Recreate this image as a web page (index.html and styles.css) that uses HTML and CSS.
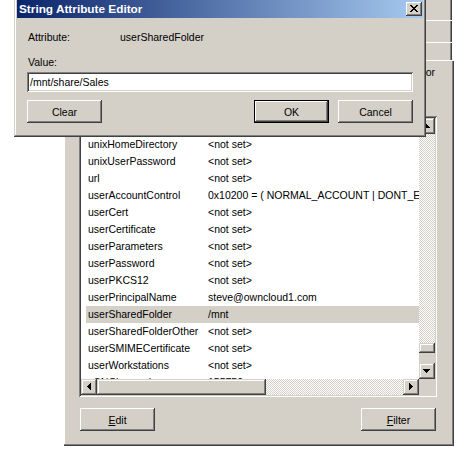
FILE: index.html
```html
<!DOCTYPE html>
<html>
<head>
<meta charset="utf-8">
<link rel="stylesheet" href="styles.css">
</head>
<body>
<div class="desk">
  <div class="props">
    <div class="tabrow r1"><span class="tab">General</span><span class="tab">Address</span><span class="tab">Account</span></div>
    <div class="tabrow r2"><span class="tab">Profile</span><span class="tab">Telephones</span><span class="tab">Organization</span></div>
    <div class="tabrow r3"><span class="tab">Environment</span><span class="tab">Sessions</span><span class="tab">Remote control</span></div>
    <div class="tabrow sel"><span class="tab">Member Of</span><span class="tab cur">Attribute Editor</span></div>
    <div class="page">
      <div class="listbox">
        <div class="lv">
          <div class="lv-head"><span class="c1">Attribute</span><span class="c2">Value</span></div>
          <div class="lv-row"><span class="c1">unixHomeDirectory</span><span class="c2">&lt;not set&gt;</span></div>
          <div class="lv-row"><span class="c1">unixUserPassword</span><span class="c2">&lt;not set&gt;</span></div>
          <div class="lv-row"><span class="c1">url</span><span class="c2">&lt;not set&gt;</span></div>
          <div class="lv-row"><span class="c1">userAccountControl</span><span class="c2">0x10200 = ( NORMAL_ACCOUNT | DONT_EXPIRE_PASSWORD )</span></div>
          <div class="lv-row"><span class="c1">userCert</span><span class="c2">&lt;not set&gt;</span></div>
          <div class="lv-row"><span class="c1">userCertificate</span><span class="c2">&lt;not set&gt;</span></div>
          <div class="lv-row"><span class="c1">userParameters</span><span class="c2">&lt;not set&gt;</span></div>
          <div class="lv-row"><span class="c1">userPassword</span><span class="c2">&lt;not set&gt;</span></div>
          <div class="lv-row"><span class="c1">userPKCS12</span><span class="c2">&lt;not set&gt;</span></div>
          <div class="lv-row"><span class="c1">userPrincipalName</span><span class="c2">steve@owncloud1.com</span></div>
          <div class="lv-row selected"><span class="c1">userSharedFolder</span><span class="c2">/mnt</span></div>
          <div class="lv-row"><span class="c1">userSharedFolderOther</span><span class="c2">&lt;not set&gt;</span></div>
          <div class="lv-row"><span class="c1">userSMIMECertificate</span><span class="c2">&lt;not set&gt;</span></div>
          <div class="lv-row"><span class="c1">userWorkstations</span><span class="c2">&lt;not set&gt;</span></div>
          <div class="lv-row"><span class="c1">uSNChanged</span><span class="c2">155750</span></div>
        </div>
        <div class="vscroll">
          <div class="sbtn"><svg width="16" height="16" viewBox="0 0 16 16" shape-rendering="crispEdges"><rect x="7" y="6" width="1" height="1"/><rect x="6" y="7" width="3" height="1"/><rect x="5" y="8" width="5" height="1"/><rect x="4" y="9" width="7" height="1"/></svg></div>
          <div class="vtrack"><div class="hatch"></div><div class="vthumb"></div><div class="vgap"></div></div>
          <div class="sbtn"><svg width="16" height="16" viewBox="0 0 16 16" shape-rendering="crispEdges"><rect x="4" y="6" width="7" height="1"/><rect x="5" y="7" width="5" height="1"/><rect x="6" y="8" width="3" height="1"/><rect x="7" y="9" width="1" height="1"/></svg></div>
        </div>
        <div class="hscroll">
          <div class="sbtn"><svg width="16" height="16" viewBox="0 0 16 16" shape-rendering="crispEdges"><rect x="6" y="7" width="1" height="1"/><rect x="7" y="6" width="1" height="3"/><rect x="8" y="5" width="1" height="5"/><rect x="9" y="4" width="1" height="7"/></svg></div>
          <div class="hthumb"></div>
          <div class="hatch"></div>
          <div class="sbtn"><svg width="16" height="16" viewBox="0 0 16 16" shape-rendering="crispEdges"><rect x="6" y="4" width="1" height="7"/><rect x="7" y="5" width="1" height="5"/><rect x="8" y="6" width="1" height="3"/><rect x="9" y="7" width="1" height="1"/></svg></div>
        </div>
        <div class="corner"></div>
      </div>
      <div class="actions">
        <div class="btn"><span><u>E</u>dit</span></div>
        <div class="btn"><span><u>F</u>ilter</span></div>
      </div>
    </div>
  </div>

  <div class="dlg">
    <div class="title">
      <span class="title-text">String Attribute Editor</span>
      <div class="close"><svg width="16" height="14" viewBox="0 0 16 14" shape-rendering="crispEdges">
        <rect x="4" y="3" width="2" height="1"/><rect x="10" y="3" width="2" height="1"/>
        <rect x="5" y="4" width="2" height="1"/><rect x="9" y="4" width="2" height="1"/>
        <rect x="6" y="5" width="4" height="1"/>
        <rect x="7" y="6" width="2" height="1"/>
        <rect x="6" y="7" width="4" height="1"/>
        <rect x="5" y="8" width="2" height="1"/><rect x="9" y="8" width="2" height="1"/>
        <rect x="4" y="9" width="2" height="1"/><rect x="10" y="9" width="2" height="1"/>
      </svg></div>
    </div>
    <div class="dbody">
      <div class="attr"><span class="attr-label">Attribute:</span><span>userSharedFolder</span></div>
      <div class="vlabel">Value:</div>
      <div class="field">/mnt/share/Sales</div>
      <div class="dbtns">
        <div class="btn"><span>Clear</span></div>
        <div class="btn default ok"><span>OK</span></div>
        <div class="btn"><span>Cancel</span></div>
      </div>
    </div>
  </div>
</div>
</body>
</html>
```

FILE: styles.css
```css
* { box-sizing: border-box; margin: 0; padding: 0; }
html, body { background: #fff; }
body {
  width: 476px; height: 452px; overflow: hidden;
  font-family: "Liberation Sans", Arial, sans-serif;
  font-size: 10.5px; color: #000;
}
.desk { position: relative; width: 476px; height: 452px; }

/* background property sheet */
.props {
  position: absolute; left: 64px; top: 0; width: 390px; height: 446px;
  display: flex; flex-direction: column;
}
.tabrow {
  display: flex; justify-content: flex-end; align-items: center;
  background: #d4d0c8;
  margin-right: 2px;
  padding-right: 60px;
  box-shadow: inset 0 1px #fff, inset -1px 0 #404040, inset -2px 0 #808080;
  flex: none;
}
.r1 { height: 20px; box-shadow: inset -1px 0 #404040, inset -2px 0 #808080; }
.r2 { height: 22px; }
.r3 { height: 18px; }
.tab { padding: 0 10px; line-height: 14px; }
.tabrow.sel {
  height: 24px; margin-right: 0; padding-right: 19px;
  box-shadow: inset 0 1px #fff, inset -1px 0 #404040, inset -2px 0 #808080;
}
.tab.cur { padding: 0; }
.page {
  flex: 1; background: #d4d0c8;
  padding: 32px 17px 0 15px;
  box-shadow: inset -1px -1px #404040, inset -2px -2px #808080, inset 1px 0 #fff;
}

/* list box */
.listbox {
  width: 358px; height: 281px; padding: 2px;
  background: #d4d0c8;
  box-shadow: inset 1px 1px #808080, inset -1px -1px #fff, inset 2px 2px #404040, inset -2px -2px #d4d0c8;
  display: grid; grid-template-columns: 338px 16px; grid-template-rows: 261px 16px;
}
.lv { background: #fff; overflow: hidden; }
.lv-head, .lv-row {
  display: grid; grid-template-columns: 120px 1fr;
  height: 17px; line-height: 17px; white-space: nowrap;
  margin-left: 5px; padding-left: 2px;
}
.lv-head { height: 18px; background: #d4d0c8; }
.c1, .c2 { overflow: hidden; white-space: nowrap; }
.c2 { overflow: visible; }
.lv-row.selected { background: #d4d0c8; }

.hatch {
  background: repeating-conic-gradient(#d4d0c8 0 25%, #fff 0 50%) 0 0 / 2px 2px;
}
.sbtn, .hthumb, .vthumb {
  background: #d4d0c8;
  box-shadow: inset -1px -1px #404040, inset 1px 1px #d4d0c8, inset -2px -2px #808080, inset 2px 2px #fff;
}
.sbtn { width: 16px; height: 16px; flex: none; }
.sbtn svg { display: block; }
.vscroll { display: flex; flex-direction: column; }
.vtrack { flex: 1; display: flex; flex-direction: column; }
.vtrack .hatch { flex: 1; }
.vthumb { height: 10px; flex: none; }
.vgap { height: 10px; flex: none; background: #d4d0c8; }
.hscroll { display: flex; }
.hthumb { width: 169px; flex: none; }
.hscroll .hatch { flex: 1; }
.corner { background: #d4d0c8; }

.actions {
  display: flex; justify-content: space-between;
  padding: 11px 1px 0 1px;
}

/* buttons */
.btn {
  width: 75px; height: 23px;
  background: #d4d0c8;
  display: flex; align-items: center; justify-content: center;
  box-shadow: inset -1px -1px #404040, inset 1px 1px #fff, inset -2px -2px #808080, inset 2px 2px #d4d0c8;
}
.btn u { text-decoration: underline; text-underline-offset: 1px; }
.btn.default {
  box-shadow: inset 0 0 0 1px #000, inset -2px -2px #404040, inset 2px 2px #fff, inset -3px -3px #808080;
}

/* dialog */
.dlg {
  position: absolute; left: 14px; top: -3px; width: 412px; height: 140px;
  background: #d4d0c8; padding: 3px;
  box-shadow: inset -1px -1px #404040, inset 1px 1px #d4d0c8, inset -2px -2px #808080, inset 2px 2px #fff;
}
.title {
  height: 18px; display: flex; align-items: center;
  background: linear-gradient(to right, #0a246a, #a6caf0);
  padding-left: 2px;
}
.title-text { color: #fff; font-weight: bold; font-size: 11.8px; }
.close {
  margin-left: auto; margin-right: 1px;
  width: 16px; height: 14px; background: #d4d0c8;
  box-shadow: inset -1px -1px #404040, inset 1px 1px #fff, inset -2px -2px #808080, inset 2px 2px #d4d0c8;
}
.close svg { display: block; }
.dbody { padding: 13px 10px 0 10px; }
.attr { display: flex; height: 13px; line-height: 13px; padding-left: 1px; }
.attr-label { width: 92px; }
.vlabel { margin-top: 12px; height: 13px; line-height: 13px; padding-left: 1px; }
.field {
  margin-top: 3px; height: 20px; line-height: 20px; padding-left: 3px;
  background: #fff;
  box-shadow: inset 1px 1px #808080, inset -1px -1px #fff, inset 2px 2px #404040, inset -2px -2px #d4d0c8;
}
.dbtns { display: flex; margin-top: 8px; gap: 9px; }
.dbtns .ok { margin-left: auto; }
```
